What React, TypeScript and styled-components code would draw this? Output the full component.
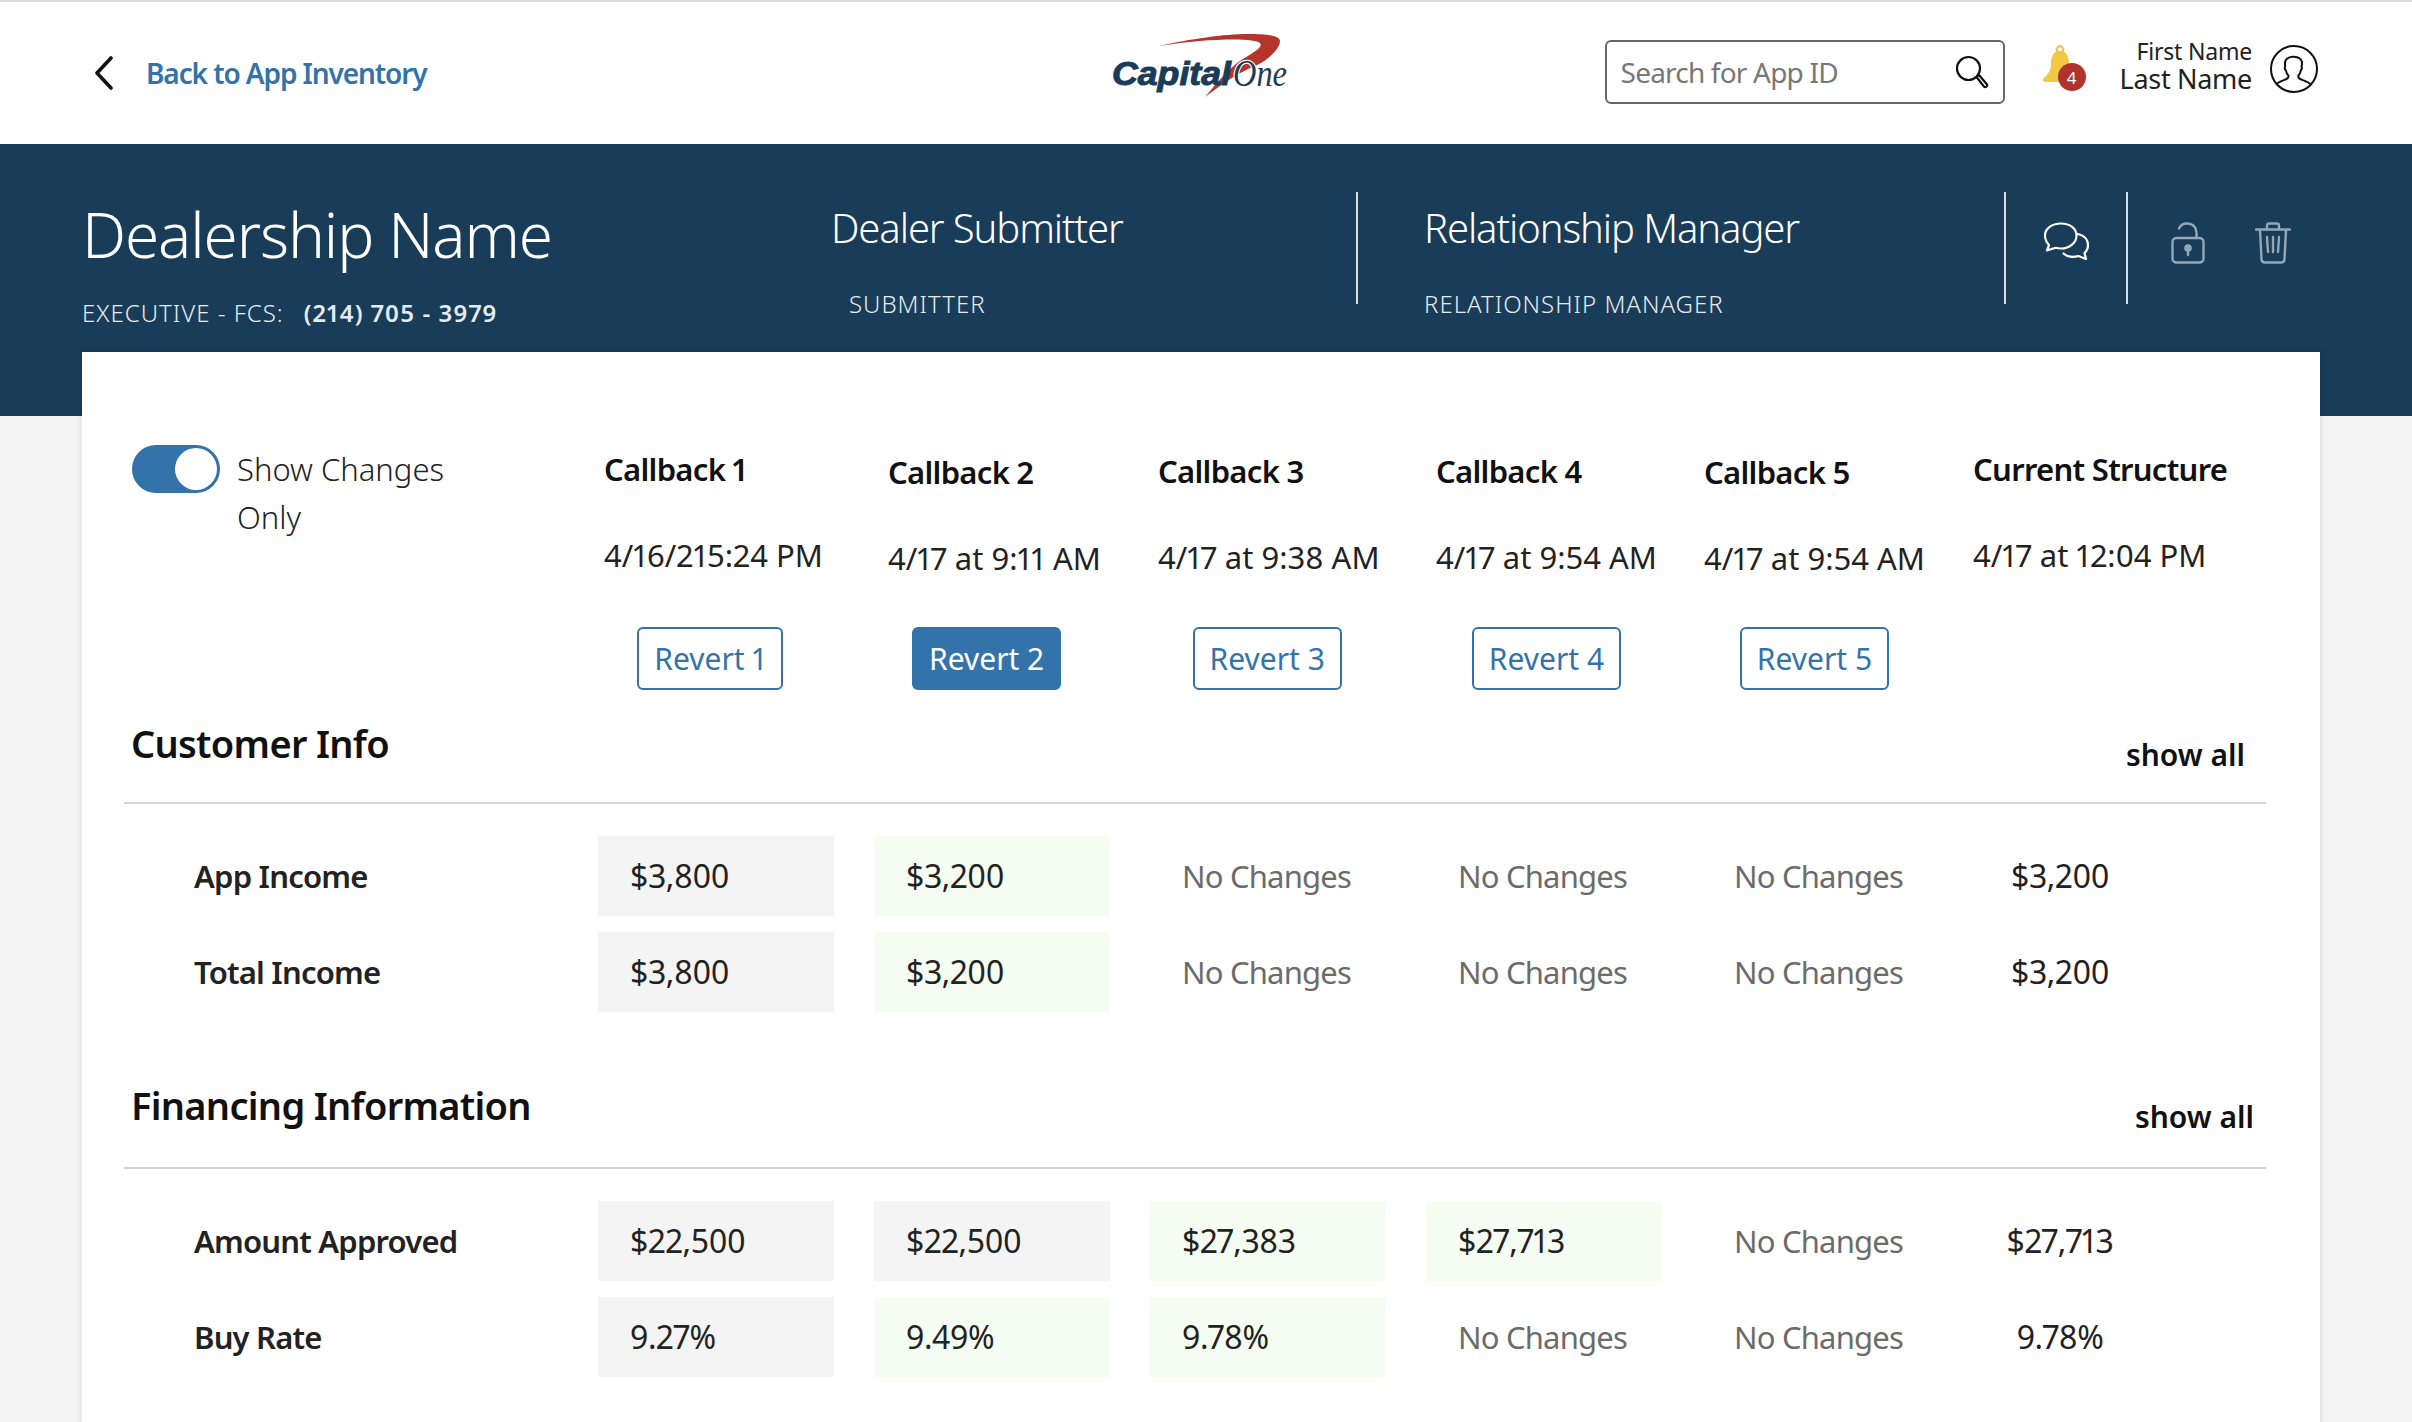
import React from 'react';
import styled, {createGlobalStyle} from 'styled-components';

const navy = '#193c59';
const blue = '#3373aa';

const GlobalStyle = createGlobalStyle`
  html, body {
    margin: 0;
    height: 100%;
    overflow: hidden;
    background: #f4f4f4;
    font-family: "Noto Sans", "Open Sans", sans-serif;
    font-variant-numeric: proportional-nums;
    color: #111;
  }
  * { box-sizing: border-box; }
`;

const Page = styled.div`
  width: 2412px;
  height: 1422px;
  overflow: hidden;
  border-top: 2px solid #ddd;
`;

const Nav = styled.header`
  display: grid;
  grid-template-columns: 1006px 200px 1fr;
  align-items: center;
  height: 142px;
  padding: 0 94px;
  background: #fff;
`;

const BackLink = styled.a`
  display: flex;
  align-items: center;
  gap: 32px;
  font-size: 28px;
  font-weight: 600;
  letter-spacing: -1.1px;
  color: ${blue};
`;

const LogoMark = styled.svg`
  margin-bottom: 16px;
`;

const NavRight = styled.div`
  display: flex;
  align-items: center;
  justify-content: flex-end;
`;

const Search = styled.div`
  display: flex;
  align-items: center;
  justify-content: space-between;
  width: 400px;
  height: 64px;
  margin-top: -2px;
  padding: 0 14px;
  border: 2px solid #666;
  border-radius: 6px;
  font-size: 28px;
  letter-spacing: -0.8px;
  color: #777;
`;

const Bell = styled.div`
  position: relative;
  width: 44px;
  height: 46px;
  margin: -10px 34px 0 37px;
`;

const Badge = styled.span`
  position: absolute;
  right: 0;
  bottom: 0;
  display: flex;
  align-items: center;
  justify-content: center;
  width: 28px;
  height: 28px;
  border-radius: 50%;
  background: #b0332d;
  color: #fff;
  font-size: 17px;
`;

const UserName = styled.div`
  display: flex;
  flex-direction: column;
  align-items: flex-end;
  margin: -14px 18px 0 0;
  color: #222;
`;

const FirstName = styled.span`
  font-size: 23px;
  line-height: 26px;
  letter-spacing: -0.2px;
`;

const LastName = styled.span`
  font-size: 27px;
  line-height: 30px;
  letter-spacing: -0.3px;
`;

const UserMark = styled.svg`
  margin-bottom: 8px;
`;

const Banner = styled.section`
  display: flex;
  height: 272px;
  padding: 48px 0 0 82px;
  background: ${navy};
  color: #fff;
`;

const Dealership = styled.div`
  width: 749px;
`;

const DealerName = styled.h1`
  margin: 0;
  font-size: 62px;
  font-weight: 300;
  line-height: 84px;
  letter-spacing: -1.1px;
`;

const DealerPhone = styled.div`
  margin-top: 21px;
  font-size: 24px;
  font-weight: 300;
  line-height: 32px;
  letter-spacing: 1px;
  color: #e6ebef;
`;

const PhoneNumber = styled.strong`
  margin-left: 20px;
  font-weight: 600;
  letter-spacing: 1.1px;
`;

const Contact = styled.div<{$width: number; $pad?: number}>`
  flex: none;
  width: ${p => p.$width}px;
  padding: 8px 0 0 ${p => p.$pad || 0}px;
`;

const ContactName = styled.div`
  font-size: 40px;
  font-weight: 300;
  line-height: 56px;
  letter-spacing: -1.1px;
`;

const ContactRole = styled.div<{$indent?: number}>`
  margin-top: 32px;
  padding-left: ${p => p.$indent || 0}px;
  font-size: 24px;
  font-weight: 300;
  line-height: 32px;
  letter-spacing: 1px;
  color: #e6ebef;
`;

const Divider = styled.div`
  flex: none;
  width: 2px;
  height: 112px;
  background: #ddd;
`;

const BannerActions = styled.div<{$width: number; $pad: number}>`
  display: flex;
  align-items: flex-start;
  gap: 50px;
  width: ${p => p.$width}px;
  padding: 30px 0 0 ${p => p.$pad}px;
`;

const Card = styled.main`
  width: 2238px;
  height: 1100px;
  margin: -64px 0 0 82px;
  padding: 93px 54px 0 42px;
  background: #fff;
  box-shadow: 0 0 6px rgba(0, 0, 0, 0.12);
`;

const CompareHeader = styled.div`
  display: grid;
  grid-template-columns: 480px 284px 270px 278px 268px 269px 1fr;
  height: 272px;
`;

const ToggleField = styled.label`
  display: flex;
  gap: 17px;
  padding-left: 8px;
`;

const Toggle = styled.span`
  flex: none;
  display: flex;
  justify-content: flex-end;
  width: 88px;
  height: 48px;
  padding: 3px;
  border-radius: 24px;
  background: ${blue};
`;

const Knob = styled.span`
  width: 42px;
  height: 42px;
  border-radius: 50%;
  background: #fff;
`;

const ToggleText = styled.span`
  width: 230px;
  font-size: 31px;
  font-weight: 300;
  line-height: 48px;
  color: #222;
`;

const Callback = styled.div<{$offset: number}>`
  display: flex;
  flex-direction: column;
  width: fit-content;
  padding-top: ${p => p.$offset}px;
`;

const CallbackTitle = styled.div`
  font-size: 31px;
  font-weight: 600;
  line-height: 30px;
  letter-spacing: -0.7px;
  white-space: nowrap;
`;

const CallbackDate = styled.div`
  margin-top: 51px;
  font-size: 31px;
  line-height: 40px;
  white-space: nowrap;
  color: #222;
`;

// all the buttons sit on one line, whatever the offset of the column above them
const RevertButton = styled.button<{$active?: boolean; $pull?: number; $offset: number}>`
  align-self: center;
  height: 63px;
  margin: ${p => 61 - p.$offset}px ${p => p.$pull || 0}px 0 0;
  padding: 0 15px;
  border: 2px solid ${blue};
  border-radius: 6px;
  background: ${p => (p.$active ? blue : '#fff')};
  color: ${p => (p.$active ? '#fff' : blue)};
  font-family: inherit;
  font-size: 30px;
  font-variant-numeric: inherit;
  white-space: nowrap;
`;

const SectionHeader = styled.div<{$inset: number; $gap: number}>`
  display: flex;
  justify-content: space-between;
  padding: 0 ${p => p.$inset}px ${p => p.$gap}px 7px;
  border-bottom: 2px solid #d4d4d4;
`;

const SectionTitle = styled.h2`
  margin: 0;
  font-size: 38px;
  font-weight: 600;
  line-height: 52px;
  letter-spacing: -0.7px;
`;

const ShowAll = styled.a`
  align-self: flex-start;
  margin-top: 17px;
  font-size: 30px;
  font-weight: 600;
`;

const Rows = styled.div`
  display: flex;
  flex-direction: column;
  gap: 16px;
  padding-top: 32px;
`;

const Row = styled.div`
  display: grid;
  grid-template-columns: 434px repeat(5, 236px) 164px;
  column-gap: 40px;
  align-items: center;
`;

const RowLabel = styled.div`
  padding-left: 70px;
  font-size: 31px;
  font-weight: 600;
  letter-spacing: -0.8px;
  color: #222;
`;

const Cell = styled.div<{$kind: string}>`
  height: 80px;
  padding-left: ${p => (p.$kind === 'current' ? 0 : 32)}px;
  background: ${p => (p.$kind === 'old' ? '#f4f4f4' : p.$kind === 'new' ? '#f5fdf2' : 'transparent')};
  color: ${p => (p.$kind === 'none' ? '#6b6b6b' : '#222')};
  text-align: ${p => (p.$kind === 'current' ? 'center' : 'left')};
  font-size: ${p => (p.$kind === 'none' ? 31 : 32)}px;
  letter-spacing: ${p => (p.$kind === 'none' ? -0.8 : -0.4)}px;
  line-height: 80px;
  white-space: nowrap;
`;

const SectionGap = styled.div`
  height: 67px;
`;

function ChevronIcon() {
  return (
    <svg width="20" height="34" viewBox="0 0 20 34" fill="none" stroke="#111" strokeWidth="3.6" strokeLinecap="round" strokeLinejoin="round">
      <path d="M17 2 3 17l14 15" />
    </svg>
  );
}

function Logo() {
  return (
    <LogoMark width="200" height="70" viewBox="0 0 200 70">
      <path
        d="M59 16C90 9 125 4 147 4c18 0 33 1 33 7 0 9-15 22-30 27-17 8-32 19-45 29 10-12 20-24 32-34 13-9 27-15 23-20-5-5-50-5-101 3z"
        fill="#b5352d"
      />
      <text x="12" y="55" fontFamily="Liberation Sans" fontStyle="italic" fontWeight="700" fontSize="33" textLength="119" lengthAdjust="spacingAndGlyphs" fill={navy} stroke={navy} strokeWidth="1">
        Capital
      </text>
      <text x="133" y="56" fontFamily="Liberation Serif" fontStyle="italic" fontSize="38" textLength="54" lengthAdjust="spacingAndGlyphs" fill={navy} stroke="#fff" strokeWidth="2.5" paintOrder="stroke">
        One
      </text>
    </LogoMark>
  );
}

function SearchIcon() {
  return (
    <svg width="34" height="34" viewBox="0 0 34 34" fill="none" stroke="#111" strokeWidth="2.2" strokeLinecap="round" strokeLinejoin="round">
      <circle cx="13.5" cy="13.5" r="11.5" />
      <path d="m21.5 22 2.5-2 8 9.5c1 1.5-1.5 3.5-3 2.2z" />
    </svg>
  );
}

function BellIcon() {
  return (
    <svg width="36" height="40" viewBox="0 0 36 40" fill="#f3c846">
      <circle cx="18" cy="4.5" r="3.2" fill="none" stroke="#f3c846" strokeWidth="2.4" />
      <path d="M18 6c7 0 9 6 9 13 0 8 4 12 7 15 1 2-1 3-3 3H5c-3 0-5-1-4-3 3-3 8-7 8-15 0-7 2-13 9-13z" />
    </svg>
  );
}

function UserIcon() {
  return (
    <UserMark width="48" height="48" viewBox="0 0 48 48" fill="none" stroke="#111" strokeWidth="2" strokeLinejoin="round">
      <circle cx="24" cy="24" r="23" />
      <path d="M6 39.5c2-2.5 6-3.7 10-5.2 2-.8 2.5-1.8 2.5-3.5-1.6-1.6-2.3-3.4-2.8-5.8-1-.4-1.2-3-.5-3.4-.4-2.5-.5-4.4.6-6.6 1.6-2.4 5.4-3.5 8.2-3.3 3 .2 7 1.3 7.7 4.7.6 1.9.2 3.6-.2 5.2.7.5.5 3-.5 3.4-.5 2.4-1.2 4.2-2.8 5.8 0 1.7.5 2.7 2.5 3.5 4 1.5 8 2.7 10 5.2" />
    </UserMark>
  );
}

function ChatIcon() {
  return (
    <svg width="46" height="38" viewBox="0 0 46 38" fill="none" stroke="#fff" strokeWidth="2.2" strokeLinejoin="round" strokeLinecap="round">
      <path d="M17 1.5c9 0 15.5 5 15.5 12S26 26.5 17 26.5c-2 0-3.7-.2-5.5-.7L3 28.500l2-5.500C2.500 20.500 1 17.300 1 13.500c0-7 7-12 16-12z" />
      <path d="M34 12c6 1.500 10 5.500 10 11 0 3.300-1.300 6-3.500 8l1.500 6-7.500-3c-6 1.500-11.500.8-15-2.500" />
    </svg>
  );
}

function LockIcon() {
  return (
    <svg width="34" height="42" viewBox="0 0 34 42" fill="none" stroke="#93a8b7" strokeWidth="2.4" strokeLinecap="round">
      <path d="M8 6.500C9.500 3 12.500 1.500 16 1.500c6 0 9.500 4 9.500 9V16" />
      <rect x="1.500" y="16" width="31" height="24.500" rx="4" />
      <circle cx="17" cy="26" r="2.600" fill="#93a8b7" />
      <path d="M17 27v6" />
    </svg>
  );
}

function TrashIcon() {
  return (
    <svg width="36" height="42" viewBox="0 0 36 42" fill="none" stroke="#93a8b7" strokeWidth="2.4" strokeLinecap="round" strokeLinejoin="round">
      <path d="M1 7.500h34" />
      <path d="M12 7V3.500c0-1.500 1-2 2-2h8c1 0 2 .5 2 2V7" />
      <path d="M5 8l1.500 29c0 2 1.200 3.500 3.500 3.500h16c2.300 0 3.500-1.500 3.500-3.500L31 8" />
      <path d="M12 15l1 15M18 15v15M24 15l-1 15" />
    </svg>
  );
}

const callbacks = [
  {title: 'Callback 1', date: '4/16/215:24 PM', revert: 'Revert 1', offset: 9, pull: 7},
  {title: 'Callback 2', date: '4/17 at 9:11 AM', revert: 'Revert 2', offset: 12, active: true, pull: 16},
  {title: 'Callback 3', date: '4/17 at 9:38 AM', revert: 'Revert 3', offset: 11, pull: 3},
  {title: 'Callback 4', date: '4/17 at 9:54 AM', revert: 'Revert 4', offset: 11},
  {title: 'Callback 5', date: '4/17 at 9:54 AM', revert: 'Revert 5', offset: 12},
  {title: 'Current Structure', date: '4/17 at 12:04 PM', offset: 9},
];

const NONE = 'No Changes';

const sections = [
  {
    title: 'Customer Info',
    inset: 21,
    gap: 27,
    spaced: true,
    rows: [
      {label: 'App Income', kinds: ['old', 'new', 'none', 'none', 'none'], values: ['$3,800', '$3,200', NONE, NONE, NONE, '$3,200']},
      {label: 'Total Income', kinds: ['old', 'new', 'none', 'none', 'none'], values: ['$3,800', '$3,200', NONE, NONE, NONE, '$3,200']},
    ],
  },
  {
    title: 'Financing Information',
    inset: 12,
    gap: 30,
    rows: [
      {label: 'Amount Approved', kinds: ['old', 'old', 'new', 'new', 'none'], values: ['$22,500', '$22,500', '$27,383', '$27,713', NONE, '$27,713']},
      {label: 'Buy Rate', kinds: ['old', 'new', 'new', 'none', 'none'], values: ['9.27%', '9.49%', '9.78%', NONE, NONE, '9.78%']},
    ],
  },
];

function App() {
  return (
    <Page>
      <GlobalStyle />
      <Nav>
        <BackLink>
          <ChevronIcon />
          Back to App Inventory
        </BackLink>
        <Logo />
        <NavRight>
          <Search>
            Search for App ID
            <SearchIcon />
          </Search>
          <Bell>
            <BellIcon />
            <Badge>4</Badge>
          </Bell>
          <UserName>
            <FirstName>First Name</FirstName>
            <LastName>Last Name</LastName>
          </UserName>
          <UserIcon />
        </NavRight>
      </Nav>

      <Banner>
        <Dealership>
          <DealerName>Dealership Name</DealerName>
          <DealerPhone>
            EXECUTIVE - FCS:
            <PhoneNumber>(214) 705 - 3979</PhoneNumber>
          </DealerPhone>
        </Dealership>
        <Contact $width={525}>
          <ContactName>Dealer Submitter</ContactName>
          <ContactRole $indent={18}>SUBMITTER</ContactRole>
        </Contact>
        <Divider />
        <Contact $width={646} $pad={66}>
          <ContactName>Relationship Manager</ContactName>
          <ContactRole>RELATIONSHIP MANAGER</ContactRole>
        </Contact>
        <Divider />
        <BannerActions $width={120} $pad={38}>
          <ChatIcon />
        </BannerActions>
        <Divider />
        <BannerActions $width={200} $pad={43}>
          <LockIcon />
          <TrashIcon />
        </BannerActions>
      </Banner>

      <Card>
        <CompareHeader>
          <ToggleField>
            <Toggle>
              <Knob />
            </Toggle>
            <ToggleText>Show Changes Only</ToggleText>
          </ToggleField>
          {callbacks.map(callback => (
            <Callback key={callback.title} $offset={callback.offset}>
              <CallbackTitle>{callback.title}</CallbackTitle>
              <CallbackDate>{callback.date}</CallbackDate>
              {callback.revert && (
                <RevertButton $active={callback.active} $pull={callback.pull} $offset={callback.offset}>
                  {callback.revert}
                </RevertButton>
              )}
            </Callback>
          ))}
        </CompareHeader>

        {sections.map(section => (
          <section key={section.title}>
            <SectionHeader $inset={section.inset} $gap={section.gap}>
              <SectionTitle>{section.title}</SectionTitle>
              <ShowAll>show all</ShowAll>
            </SectionHeader>
            <Rows>
              {section.rows.map(row => (
                <Row key={row.label}>
                  <RowLabel>{row.label}</RowLabel>
                  {row.values.map((value, index) => (
                    <Cell key={index} $kind={row.kinds[index] || 'current'}>
                      {value}
                    </Cell>
                  ))}
                </Row>
              ))}
            </Rows>
            {section.spaced && <SectionGap />}
          </section>
        ))}
      </Card>
    </Page>
  );
}

export default App;
